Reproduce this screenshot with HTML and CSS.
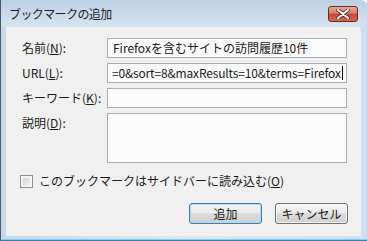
FILE: index.html
```html
<!DOCTYPE html>
<html lang="ja">
<head>
  <meta charset="UTF-8">
  <title>ブックマークの追加</title>
  <link rel="stylesheet" href="styles.css">
</head>
<body>
  <div class="window">
    <div class="titlebar">
      <span class="title">ブックマークの追加</span>
      <span class="close-btn">
        <svg viewBox="0 0 14 10" width="14" height="10">
          <path d="M2 1 L12 9 M12 1 L2 9" stroke="#5a1a12" stroke-width="3.6" stroke-linecap="round"/>
          <path d="M2 1 L12 9 M12 1 L2 9" stroke="#ffffff" stroke-width="2.2" stroke-linecap="round"/>
        </svg>
      </span>
    </div>

    <div class="dialog">
      <div class="form">
        <label class="field-label">名前(<u>N</u>):</label>
        <div class="textbox">Firefoxを含むサイトの訪問履歴10件</div>

        <label class="field-label">URL(<u>L</u>):</label>
        <div class="textbox textbox-caret"><span class="url-text">=0&amp;sort=8&amp;maxResults=10&amp;terms=Firefox</span><span class="caret"></span></div>

        <label class="field-label">キーワード(<u>K</u>):</label>
        <div class="textbox"></div>

        <label class="field-label">説明(<u>D</u>):</label>
        <div class="textbox textarea"></div>
      </div>

      <label class="check-row">
        <span class="checkbox"></span>
        <span>このブックマークはサイドバーに読み込む(<u>O</u>)</span>
      </label>

      <div class="buttons">
        <span class="btn btn-default">追加</span>
        <span class="btn">キャンセル</span>
      </div>
    </div>
  </div>
</body>
</html>
```

FILE: styles.css
```css
:root {
  --dialog-bg: #f0f0f0;
  --frame-dark: #4a5868;
  --text-color: #1a1a1a;
  --box-border: #abadb3;
}

body {
  margin: 0;
  padding: 0;
  font-family: "Noto Sans CJK JP", sans-serif;
  font-size: 12px;
  color: var(--text-color);
}

.window {
  width: 367px;
  height: 241px;
  box-sizing: border-box;
  display: flex;
  flex-direction: column;
  padding: 0 6px 5px 5px;
  background: linear-gradient(to right, #c9d9ea, #d9e5f2 50%, #d0def0);
  border-left: 1px solid var(--frame-dark);
  border-top-right-radius: 6px;
  box-shadow: inset 0 -1px 0 #3f7cb0, inset 0 -2px 0 #8ccbf0;
}

.titlebar {
  height: 27px;
  flex-shrink: 0;
  display: flex;
  align-items: center;
  justify-content: space-between;
  margin: 0 -6px 0 -5px;
  padding: 0 9px 0 8px;
  background: linear-gradient(#bccfe4, #cddcec 60%, #d6e2ef);
  border-top-right-radius: 6px;
}

.title {
  font-size: 12px;
  line-height: 14px;
  color: #1e1e1e;
  letter-spacing: -0.6px;
  margin-top: 1px;
}

.close-btn {
  width: 28px;
  height: 14px;
  margin-top: 1px;
  display: flex;
  align-items: center;
  justify-content: center;
  border: 1px solid #6b2a20;
  border-radius: 3px;
  background: linear-gradient(#e9a99b, #d47a6a 45%, #c2493a 50%, #cf6b52);
}

.dialog {
  flex: 1;
  background-color: var(--dialog-bg);
  padding: 11px 14px 0 16px;
  display: flex;
  flex-direction: column;
}

.form {
  display: grid;
  grid-template-columns: 85px 1fr;
  grid-template-rows: 20px 20px 20px 50px;
  row-gap: 5px;
}

.field-label {
  line-height: 18px;
  padding-top: 1px;
}

.textbox {
  box-sizing: border-box;
  border: 1px solid var(--box-border);
  background-color: #fbfbfb;
  padding: 0 4px 0 5px;
  line-height: 18px;
  white-space: nowrap;
  overflow: hidden;
}

.textbox-caret {
  display: flex;
  align-items: center;
  padding: 0 1px 0 4px;
}

.url-text {
  letter-spacing: -0.15px;
}

.caret {
  flex-shrink: 0;
  width: 1px;
  height: 14px;
  margin-left: 1px;
  background-color: #000;
}

.textarea {
  height: 50px;
}

.check-row {
  display: flex;
  align-items: center;
  gap: 6px;
  margin: 10px 0 0 -2px;
  height: 16px;
  line-height: 16px;
}

.checkbox {
  box-sizing: border-box;
  width: 13px;
  height: 13px;
  border: 1px solid #8e8f8f;
  background: linear-gradient(135deg, #cbcfd5, #f6f6f6);
  box-shadow: inset 0 0 0 2px #f4f4f4;
}

.buttons {
  display: flex;
  justify-content: flex-end;
  gap: 13px;
  margin: 14px -1px 0 0;
}

.btn {
  box-sizing: border-box;
  width: 73px;
  height: 21px;
  display: flex;
  align-items: center;
  justify-content: center;
  line-height: 16px;
  border: 1px solid #707070;
  border-radius: 3px;
  background: linear-gradient(#f2f2f2, #ebebeb 48%, #dddddd 50%, #cfcfcf);
  box-shadow: inset 0 0 0 1px rgba(255, 255, 255, 0.7);
}

.btn-default {
  border-color: #3c7fb1;
  box-shadow: inset 0 0 0 1px #a6dcf5;
}
```
